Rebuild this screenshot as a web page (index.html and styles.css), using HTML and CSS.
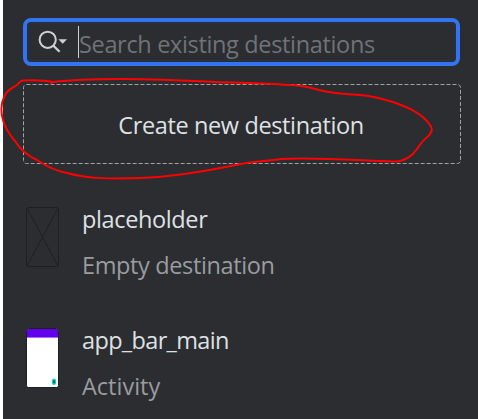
FILE: index.html
```html
<!DOCTYPE html>
<html lang="en">
<head>
<meta charset="utf-8">
<title>Destinations</title>
<link rel="stylesheet" href="styles.css">
</head>
<body>
<main class="panel">
  <div class="search">
    <svg class="search-icon" width="30" height="24" viewBox="0 0 30 24">
      <circle cx="9.7" cy="9.8" r="8.1" fill="none" stroke="#ced0d6" stroke-width="2"/>
      <path d="M15.3 15.6L21.6 21.7" stroke="#ced0d6" stroke-width="2.2"/>
      <path d="M20.4 9.3H29L24.7 13.8Z" fill="#ced0d6"/>
    </svg>
    <span class="caret"></span>
    <span class="text hint">Search existing destinations</span>
  </div>
  <div class="create">
    <svg class="outline" width="438" height="80"><rect x=".5" y=".5" width="437" height="79" rx="3"/></svg>
    <span class="text create-label">Create new destination</span>
  </div>
  <div class="item">
    <svg class="thumb" width="33" height="60" viewBox="0 0 33 60">
      <g fill="none" stroke="#1e1f22"><rect x=".5" y=".5" width="32" height="59" rx="2"/><path d="M1 1L32 59M32 1L1 59"/></g>
    </svg>
    <div class="labels">
      <span class="text name placeholder">placeholder</span>
      <span class="text kind empty">Empty destination</span>
    </div>
  </div>
  <div class="item second">
    <svg class="thumb" width="33" height="60" viewBox="0 0 33 60">
      <rect x=".5" y=".5" width="32" height="59" rx="2" fill="#fff"/>
      <path d="M1 1H32V9H1Z" fill="#6200ee"/>
      <path d="M1 9.5H32" stroke="#a66af5"/>
      <ellipse cx="28" cy="53.7" rx="2.2" ry="3.2" fill="#03dac5"/>
      <ellipse cx="28" cy="53.7" rx="1.2" ry="1.8" fill="#04665e"/>
      <rect x=".5" y=".5" width="32" height="59" rx="2" fill="none" stroke="#1e1f22"/>
    </svg>
    <div class="labels">
      <span class="text name appbar">app_bar_main</span>
      <span class="text kind activity">Activity</span>
    </div>
  </div>
</main>
<svg class="scribble" width="478" height="419" viewBox="0 0 478 419">
  <path d="M50 84L53 82C44 80 34 80 23 80.5C20 81 19 83 17 85C11 89 7 90 4.500 96C0 105 1 113 3 120C6 131 11 136 15 141C20 149 28 156 37 160C46 166 55 171 67 173C88 179 112 179 140 178C174 177 207 171 241 164C253 162 266 161 281 159C312 157 352 160 394 161.500C405 162 413 155 417 149C421 143 424 139 428 136.500C432 132 433 129 430 125C422 113 407 107 393 102C383 99 372 96 360 95C345 94 334 94 319 90C309 87 301 85 288 85C265 83 240 83 215 82C177 80 151 79 121 79C98 79 74 79.500 53 82"/>
</svg>
</body>
</html>
```
FILE: styles.css
```css
* { box-sizing: border-box; }
body {
  margin: 0;
  background: #fff;
  font-family: "Open Sans", "Noto Sans", sans-serif;
}
.panel {
  height: 419px;
  margin-left: 3px;
  padding: 18px 0 0 20px;
  overflow: hidden;
  background: #2b2d30;
}
.search {
  display: flex;
  align-items: center;
  width: 437px;
  height: 48px;
  padding-left: 13px;
  border: 4px solid #3574f0;
  border-radius: 8px;
  box-shadow: inset 0 0 0 1px #2b2d30, inset 0 0 0 2px #25324d;
}
.search-icon { flex: none; margin-left: -2px; }
.caret {
  width: 1px;
  height: 32px;
  margin-left: 10px;
  background: #ced0d6;
}
.text {
  font-size: 23.5px;
  line-height: 32px;
  white-space: nowrap;
}
.hint { padding-top: 3px; color: #6f737a; letter-spacing: -0.34px; }
.create {
  position: relative;
  display: flex;
  align-items: center;
  justify-content: center;
  width: 438px;
  height: 80px;
  margin-top: 18px;
}
.outline { position: absolute; inset: 0; }
.outline rect { fill: none; stroke: #a0a2a5; stroke-dasharray: 4 2; }
.create-label, .name { color: #dfe1e5; }
.create-label { padding: 2px 2px 0 0; letter-spacing: -0.37px; }
.item {
  display: flex;
  gap: 23px;
  margin-top: 39px;
  padding-left: 3px;
}
.thumb { flex: none; margin-top: 4px; }
.second { margin-top: 43px; }
.labels {
  display: flex;
  flex-direction: column;
  gap: 14px;
  height: 78px;
}
.placeholder, .empty { letter-spacing: -0.37px; }
.appbar { letter-spacing: -0.65px; }
.kind { color: #9a9ca1; }
.scribble { position: absolute; top: 0; left: 0; pointer-events: none; }
.scribble path { fill: none; stroke: #f00; stroke-width: 2; stroke-linejoin: round; }
```
